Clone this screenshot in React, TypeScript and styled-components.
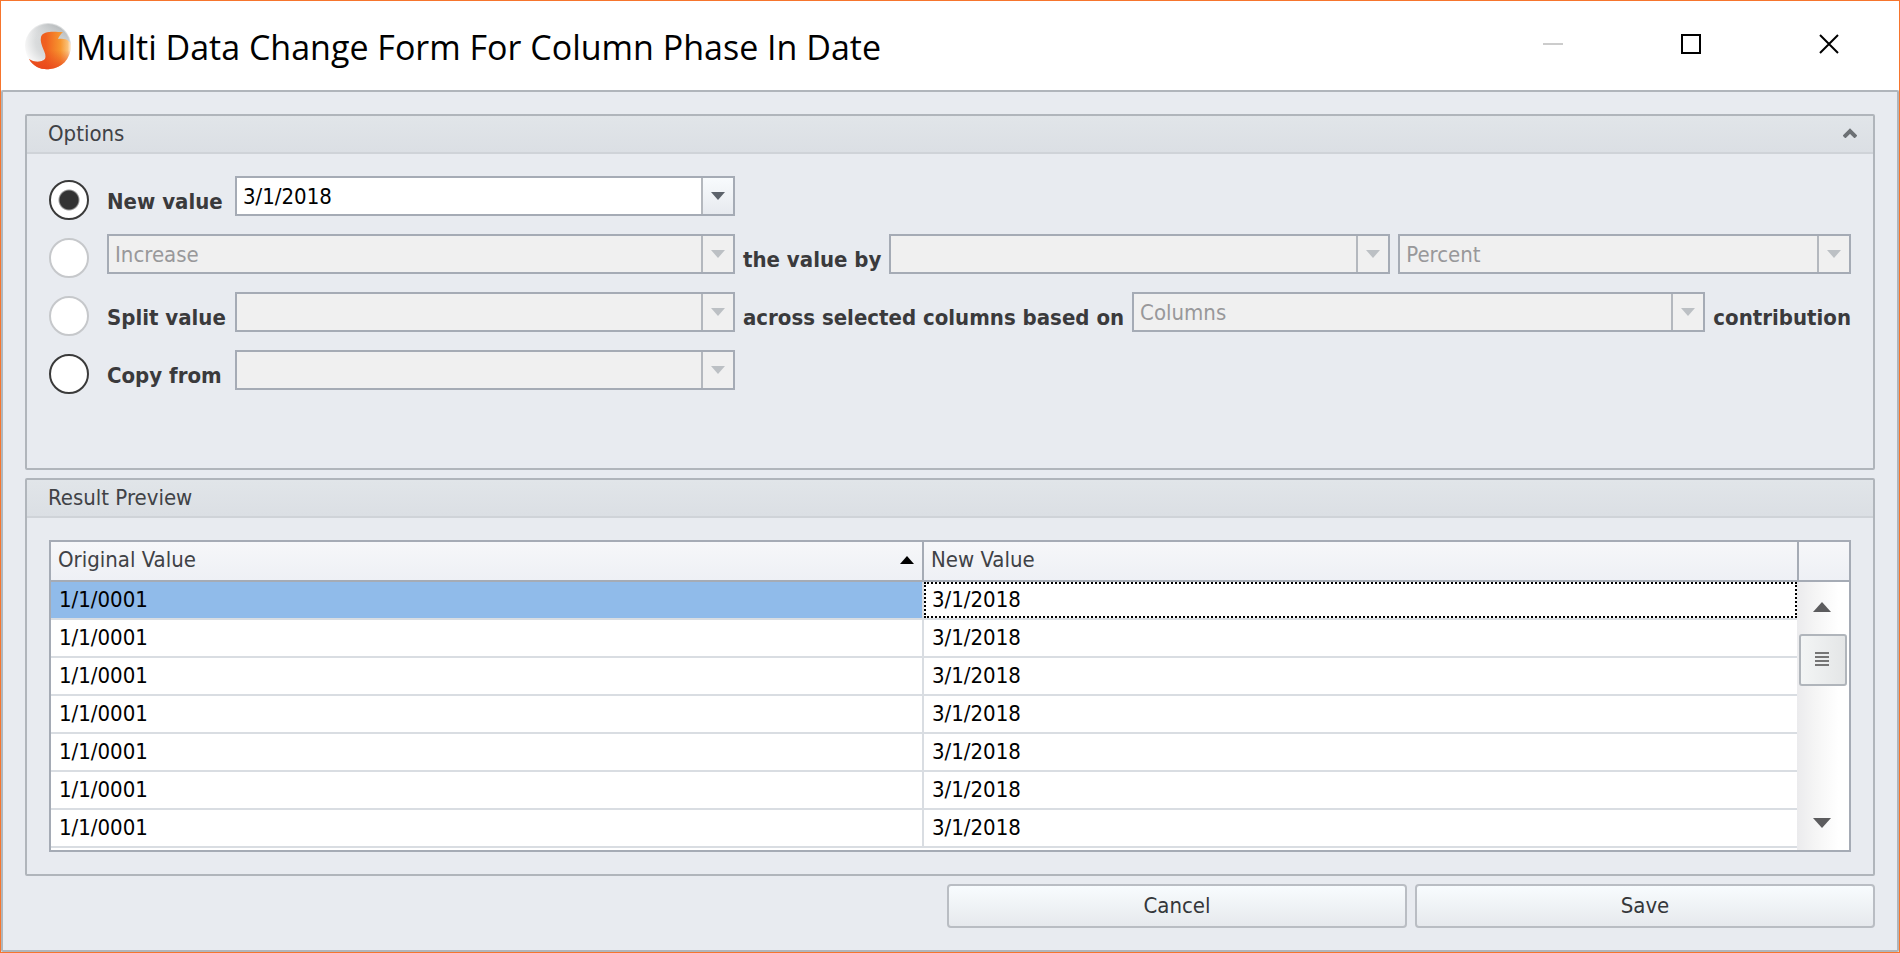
import React from "react";
import styled, { createGlobalStyle, css } from "styled-components";

const Global = createGlobalStyle`
  *, *::before, *::after { box-sizing: border-box; }
  body { margin: 0; background: #e8ebf0; }
  body, button, input, select { font-family: "DejaVu Sans Condensed", "DejaVu Sans", Tahoma, sans-serif; font-size: 22px; }
  button { cursor: default; }
`;

const Window = styled.div`
  display: flex;
  flex-direction: column;
  min-height: 100vh;
  border: 1px solid #f6752d;
`;

const TitleBar = styled.header`
  display: flex;
  align-items: center;
  height: 89px;
  padding: 0 1px 0 23px;
  background: #fff;
`;

const Title = styled.h1`
  flex: 1;
  margin: 0;
  padding: 2px 0 0 4px;
  font: 400 34px/48px "Open Sans", "Segoe UI", sans-serif;
  color: #000;
  white-space: nowrap;
`;

const CaptionButton = styled.button`
  display: flex;
  align-items: center;
  justify-content: center;
  width: 138px;
  height: 86px;
  align-self: flex-start;
  padding: 0;
  border: 0;
  background: none;
`;

const Body = styled.main`
  flex: 1;
  display: flex;
  flex-direction: column;
  gap: 8px;
  padding: 22px;
  border: 2px solid #b0b5bb;
  border-radius: 2px;
  background: #e8ebf0;
`;

const Group = styled.section`
  border: 2px solid #b0b5bb;
  border-radius: 2px;
`;

const GroupHeader = styled.div`
  display: flex;
  align-items: center;
  justify-content: space-between;
  height: 38px;
  padding: 0 16px 0 21px;
  border-bottom: 2px solid #cfd3d8;
  background: linear-gradient(#e1e5e9, #dbdfe4);
`;

const GroupTitle = styled.h2`
  margin: 0;
  font-size: 22px;
  font-weight: 400;
  line-height: 28px;
  color: #404246;
`;

const CollapseButton = styled.button`
  display: flex;
  padding: 0 0 2px;
  border: 0;
  background: none;
`;

const OptionRows = styled.div`
  display: flex;
  flex-direction: column;
  gap: 18px;
  padding: 22px 22px 78px;
`;

const OptionRow = styled.div`
  display: grid;
  grid-template-rows: 40px;
  grid-template-columns: 50px minmax(0, 628fr) minmax(0, 1108fr);
  gap: 8px;
`;

const RowPart = styled.div`
  display: flex;
  gap: 8px;
`;

const Radio = styled.input`
  appearance: none;
  width: 40px;
  height: 40px;
  margin: 4px 0 0;
  border: 2px solid #3a3a3a;
  border-radius: 50%;
  background: #fff;
  &:checked { background: radial-gradient(circle, #333 9px, #fff 11px); }
  &:disabled { border-color: #c6c8cb; }
`;

const labelText = css`
  padding-top: 11px;
  font-size: 22px;
  font-weight: 700;
  line-height: 30px;
  color: #3a3a3c;
  white-space: nowrap;
`;

const LeadLabel = styled.label`
  ${labelText}
  width: 120px;
`;

const InlineLabel = styled.label`
  ${labelText}
`;

const Field = styled.div<{ $grow?: number }>`
  position: relative;
  display: flex;
  flex: ${(p) => p.$grow ?? 1} 1 0;
  min-width: 0;
  height: 40px;
`;

const control = css`
  appearance: none;
  width: 100%;
  height: 40px;
  padding: 0 40px 0 6px;
  border: 2px solid #a5abb5;
  border-radius: 0;
  outline: 0;
  background: #fff;
  color: #000;
  &:disabled { background: #f0f0f0; color: #98989a; opacity: 1; }
`;

const TextInput = styled.input`${control}`;
const Select = styled.select`${control}`;

const dropStyle = css`
  position: absolute;
  top: 2px;
  right: 2px;
  bottom: 2px;
  display: flex;
  align-items: center;
  justify-content: center;
  width: 32px;
  padding: 0;
  border: 0;
  border-left: 2px solid #b4b8be;
`;

const DropButton = styled.button`
  ${dropStyle}
  background: linear-gradient(#f8fbfd, #e7eaef);
`;

const DropMark = styled.span`
  ${dropStyle}
  background: #f0f0f0;
  pointer-events: none;
`;

const PreviewArea = styled.div`
  padding: 22px;
`;

const Grid = styled.div`
  display: flex;
  border: 2px solid #a5abb5;
  background: #fff;
`;

const TableArea = styled.div`
  flex: 1;
  min-width: 0;
  padding-bottom: 2px;
`;

const Table = styled.table`
  width: 100%;
  table-layout: fixed;
  border-collapse: separate;
  border-spacing: 0;
`;

const HeadCell = styled.th`
  height: 40px;
  padding: 0 8px 2px 7px;
  border-bottom: 2px solid #a5abb5;
  background: linear-gradient(#f6f7f9, #eef0f5);
  font-weight: 400;
  line-height: 30px;
  text-align: left;
  color: #404246;
  &:first-child { border-right: 2px solid #a5abb5; }
`;

const HeadContent = styled.span`
  display: flex;
  align-items: center;
  justify-content: space-between;
`;

const Cell = styled.td<{ $selected?: boolean; $focused?: boolean }>`
  position: relative;
  height: 38px;
  padding: 0 8px;
  border-bottom: 2px solid #d9dde2;
  background: ${(p) => (p.$selected ? "#90bbea" : "#fff")};
  line-height: 30px;
  color: #000;
  &:first-child { border-right: 2px solid #d9dde2; }
  ${(p) =>
    p.$focused &&
    css`
      &::after {
        content: "";
        position: absolute;
        inset: 0;
        border: 2px dotted #000;
      }
    `}
`;

const ScrollColumn = styled.div`
  display: flex;
  flex-direction: column;
  flex: none;
  width: 52px;
`;

const ScrollHead = styled.div`
  height: 40px;
  border-left: 2px solid #a5abb5;
  border-bottom: 2px solid #a5abb5;
  background: linear-gradient(#f6f7f9, #eef0f5);
`;

const ScrollTrack = styled.div`
  flex: 1;
  display: flex;
  flex-direction: column;
  align-items: center;
  background: linear-gradient(90deg, #ebebed, #f5f5f5 35%, #fff 80%);
`;

const ScrollButton = styled.button`
  display: flex;
  align-items: center;
  justify-content: center;
  width: 48px;
  height: 52px;
  padding: 0 2px 2px 0;
  border: 0;
  background: none;
`;

const Thumb = styled.div`
  display: flex;
  align-items: center;
  justify-content: center;
  width: 48px;
  height: 52px;
  margin-bottom: auto;
  padding: 0 2px 2px 0;
  border: 2px solid #b0b5bb;
  border-radius: 3px;
  background: linear-gradient(90deg, #f3f5f5, #e4e6e7);
`;

const Actions = styled.footer`
  display: grid;
  grid-template-columns: 1fr 1fr;
  gap: 8px;
  width: calc(50% + 3px);
  margin-left: auto;
`;

const ActionButton = styled.button`
  height: 44px;
  padding: 0 0 2px;
  border: 2px solid #b9bdc3;
  border-radius: 4px;
  background: linear-gradient(#f8fcfe, #e6e9ed);
  color: #35373a;
`;

const Logo = () => (
  <svg width="48" height="50" viewBox="0 0 48 50" aria-hidden="true">
    <defs>
      <radialGradient id="ball" cx="0.6" cy="0.4" r="0.62">
        <stop offset="0" stopColor="#c9cccd" />
        <stop offset="0.6" stopColor="#dadcdd" />
        <stop offset="1" stopColor="#f8f8f8" />
      </radialGradient>
      <linearGradient id="shade" x1="0.7" y1="0" x2="0.4" y2="0.5">
        <stop offset="0" stopColor="#b4b8ba" />
        <stop offset="1" stopColor="#e4e6e7" stopOpacity="0" />
      </linearGradient>
      <linearGradient id="swirl" x1="0" y1="0.4" x2="1" y2="0.4">
        <stop offset="0" stopColor="#ea5a20" />
        <stop offset="0.4" stopColor="#f0601f" />
        <stop offset="0.75" stopColor="#f7962f" />
        <stop offset="0.92" stopColor="#fac077" />
        <stop offset="1" stopColor="#fef0df" />
      </linearGradient>
      <linearGradient id="base" x1="0" y1="0" x2="0" y2="1">
        <stop offset="0.5" stopColor="#e8421c" stopOpacity="0" />
        <stop offset="1" stopColor="#e8421c" stopOpacity="0.8" />
      </linearGradient>
    </defs>
    <circle cx="24" cy="25" r="23" fill="url(#ball)" />
    <circle cx="24" cy="25" r="22" fill="url(#shade)" />
    <path id="s" d="M39 11C31 11 19 9 17 16C15 24 24 33 21 38C17 42 9 41 5 38C10 47 19 49 26 48C38 47 46 38 47 26C47 20 43 17 34 18C35 15 37 13 39 11Z" fill="url(#swirl)" />
    <path d="M39 11C31 11 19 9 17 16C15 24 24 33 21 38C17 42 9 41 5 38C10 47 19 49 26 48C38 47 46 38 47 26C47 20 43 17 34 18C35 15 37 13 39 11Z" fill="url(#base)" />
  </svg>
);

const Down = ({ color = "#bcc0c4" }: { color?: string }) => (
  <svg width="14" height="8" viewBox="0 0 14 8" aria-hidden="true">
    <path d="M0 0H14L7 8Z" fill={color} />
  </svg>
);

type ComboProps = { label: string; value?: string; grow?: number; id?: string };

const Combo = ({ label, value = "", grow, id }: ComboProps) => (
  <Field $grow={grow}>
    <Select id={id} aria-label={label} disabled defaultValue={value}>
      <option value={value}>{value}</option>
    </Select>
    <DropMark><Down /></DropMark>
  </Field>
);

const rows = Array.from({ length: 7 }, () => ({ original: "1/1/0001", next: "3/1/2018" }));

export default function App() {
  return (
    <Window>
      <Global />
      <TitleBar>
        <Logo />
        <Title>Multi Data Change Form For Column Phase In Date</Title>
        <CaptionButton aria-label="Minimize" disabled>
          <svg width="20" height="20"><path d="M0 10H20" stroke="#ccc" strokeWidth="2" /></svg>
        </CaptionButton>
        <CaptionButton aria-label="Maximize">
          <svg width="20" height="20"><path d="M1 1H19V19H1Z" fill="none" stroke="#000" strokeWidth="2" /></svg>
        </CaptionButton>
        <CaptionButton aria-label="Close">
          <svg width="20" height="20"><path d="M1 1L19 19M19 1L1 19" stroke="#000" strokeWidth="2" /></svg>
        </CaptionButton>
      </TitleBar>
      <Body>
        <Group>
          <GroupHeader>
            <GroupTitle>Options</GroupTitle>
            <CollapseButton aria-label="Collapse options">
              <svg width="14" height="10" viewBox="0 0 14 10"><path d="M1 9L7 3L13 9" fill="none" stroke="#6c7074" strokeWidth="4" /></svg>
            </CollapseButton>
          </GroupHeader>
          <OptionRows>
            <OptionRow>
              <Radio type="radio" name="mode" id="mode-new" defaultChecked />
              <RowPart>
                <LeadLabel htmlFor="mode-new">New value</LeadLabel>
                <Field>
                  <TextInput aria-label="New value date" defaultValue="3/1/2018" />
                  <DropButton aria-label="Open calendar"><Down color="#5d636b" /></DropButton>
                </Field>
              </RowPart>
            </OptionRow>
            <OptionRow>
              <Radio type="radio" name="mode" aria-label="Change the value by" disabled />
              <RowPart>
                <Combo label="Direction" value="Increase" />
              </RowPart>
              <RowPart>
                <InlineLabel htmlFor="amount">the value by</InlineLabel>
                <Combo id="amount" label="Amount" grow={500} />
                <Combo label="Unit" value="Percent" grow={452} />
              </RowPart>
            </OptionRow>
            <OptionRow>
              <Radio type="radio" name="mode" id="mode-split" disabled />
              <RowPart>
                <LeadLabel htmlFor="mode-split">Split value</LeadLabel>
                <Combo label="Value to split" />
              </RowPart>
              <RowPart>
                <InlineLabel htmlFor="basis">across selected columns based on</InlineLabel>
                <Combo id="basis" label="Basis" value="Columns" />
                <InlineLabel htmlFor="basis">contribution</InlineLabel>
              </RowPart>
            </OptionRow>
            <OptionRow>
              <Radio type="radio" name="mode" id="mode-copy" />
              <RowPart>
                <LeadLabel htmlFor="mode-copy">Copy from</LeadLabel>
                <Combo label="Source column" />
              </RowPart>
            </OptionRow>
          </OptionRows>
        </Group>
        <Group>
          <GroupHeader>
            <GroupTitle>Result Preview</GroupTitle>
          </GroupHeader>
          <PreviewArea>
            <Grid>
              <TableArea>
                <Table>
                  <thead>
                    <tr>
                      <HeadCell scope="col" aria-sort="ascending">
                        <HeadContent>
                          Original Value
                          <svg width="14" height="8" viewBox="0 0 14 8"><path d="M7 0L14 8H0Z" fill="#000" /></svg>
                        </HeadContent>
                      </HeadCell>
                      <HeadCell scope="col">New Value</HeadCell>
                    </tr>
                  </thead>
                  <tbody>
                    {rows.map((row, i) => (
                      <tr key={i}>
                        <Cell $selected={i === 0}>{row.original}</Cell>
                        <Cell $focused={i === 0}>{row.next}</Cell>
                      </tr>
                    ))}
                  </tbody>
                </Table>
              </TableArea>
              <ScrollColumn>
                <ScrollHead />
                <ScrollTrack>
                  <ScrollButton aria-label="Scroll up">
                    <svg width="18" height="10"><path d="M9 0L18 10H0Z" fill="#5c5c5e" /></svg>
                  </ScrollButton>
                  <Thumb>
                    <svg width="14" height="14"><path d="M0 1H14M0 5H14M0 9H14M0 13H14" stroke="#757575" strokeWidth="2" /></svg>
                  </Thumb>
                  <ScrollButton aria-label="Scroll down">
                    <svg width="18" height="10"><path d="M0 0H18L9 10Z" fill="#5c5c5e" /></svg>
                  </ScrollButton>
                </ScrollTrack>
              </ScrollColumn>
            </Grid>
          </PreviewArea>
        </Group>
        <Actions>
          <ActionButton>Cancel</ActionButton>
          <ActionButton>Save</ActionButton>
        </Actions>
      </Body>
    </Window>
  );
}
